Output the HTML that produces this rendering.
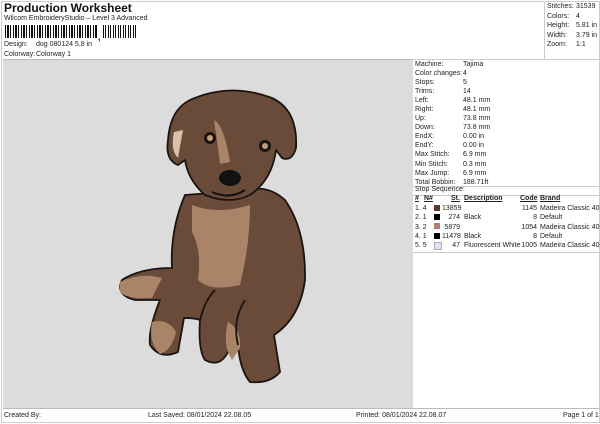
<!DOCTYPE html>
<html><head><style>
body{margin:0;width:600px;height:424px;background:#fff;font-family:"Liberation Sans",sans-serif;color:#222;position:relative;overflow:hidden}
.a{position:absolute;font-size:7px;white-space:nowrap}
.b{position:absolute}
</style></head><body>
<div class="b" style="left:1px;top:1px;width:597px;height:420px;border:1px solid #ccc"></div>
<div class="a" style="left:4px;top:1px;font-size:12px;font-weight:bold;color:#111">Production Worksheet</div>
<div class="a" style="left:4px;top:15px">Wilcom EmbroideryStudio – Level 3 Advanced</div>
<div class="b" style="left:5px;top:25px;width:93px;height:13px;background:repeating-linear-gradient(90deg,#111 0 1px,#fff 1px 2px,#111 2px 4px,#fff 4px 5px,#111 5px 6px,#fff 6px 8px)"></div>
<div class="a" style="left:98px;top:32px;font-weight:bold;font-size:9px">,</div>
<div class="b" style="left:103px;top:25px;width:33px;height:13px;background:repeating-linear-gradient(90deg,#111 0 1px,#fff 1px 2px,#111 2px 3px,#fff 3px 5px)"></div>
<div class="a" style="left:4px;top:41px">Design:</div><div class="a" style="left:36px;top:41px">dog 080124 5,8 in</div>
<div class="a" style="left:4px;top:51px">Colorway:</div><div class="a" style="left:36px;top:51px">Colorway 1</div>
<div class="b" style="left:3px;top:59px;width:410px;height:1px;background:#bbb"></div>
<div class="b" style="left:544px;top:1px;width:1px;height:58px;background:#ccc"></div>
<div class="a" style="left:547px;top:2px;line-height:9.6px">Stitches:<br>Colors:<br>Height:<br>Width:<br>Zoom:</div>
<div class="a" style="left:576px;top:2px;line-height:9.6px">31539<br>4<br>5.81 in<br>3.79 in<br>1:1</div>
<div class="b" style="left:3px;top:60px;width:410px;height:348px;background:#dcdcdc"></div>
<div class="b" style="left:413px;top:59px;width:186px;height:1px;background:#ccc"></div>
<div class="a" style="left:415px;top:60px;line-height:9.05px">Machine:<br>Color changes:<br>Stops:<br>Trims:<br>Left:<br>Right:<br>Up:<br>Down:<br>EndX:<br>EndY:<br>Max Stitch:<br>Min Stitch:<br>Max Jump:<br>Total Bobbin:</div>
<div class="a" style="left:463px;top:60px;line-height:9.05px">Tajima<br>4<br>5<br>14<br>48.1 mm<br>48.1 mm<br>73.8 mm<br>73.8 mm<br>0.00 in<br>0.00 in<br>6.9 mm<br>0.3 mm<br>6.9 mm<br>188.71ft</div>
<div class="b" style="left:413px;top:186px;width:186px;height:1px;background:#ccc"></div>
<div class="a" style="left:415px;top:186px">Stop Sequence:</div>
<div class="b" style="left:413px;top:195px;width:186px;height:1px;background:#ccc"></div>
<div class="a" style="left:415px;top:195px;font-weight:bold;text-decoration:underline">#</div>
<div class="a" style="left:424px;top:195px;font-weight:bold;text-decoration:underline">N#</div>
<div class="a" style="left:451px;top:195px;font-weight:bold;text-decoration:underline">St.</div>
<div class="a" style="left:464px;top:195px;font-weight:bold;text-decoration:underline">Description</div>
<div class="a" style="left:520px;top:195px;font-weight:bold;text-decoration:underline">Code</div>
<div class="a" style="left:540px;top:195px;font-weight:bold;text-decoration:underline">Brand</div>
<div class="a" style="left:415px;top:204px;line-height:9.3px">1. 4<br>2. 1<br>3. 2<br>4. 1<br>5. 5</div>
<div class="b" style="left:434px;top:205px;width:6px;height:6px;background:#5a3a2e"></div>
<div class="b" style="left:434px;top:214px;width:6px;height:6px;background:#000"></div>
<div class="b" style="left:434px;top:223px;width:6px;height:6px;background:#b08070"></div>
<div class="b" style="left:434px;top:233px;width:6px;height:6px;background:#000"></div>
<div class="b" style="left:434px;top:242px;width:6px;height:6px;background:#dde2f5;border:1px solid #aab"></div>
<div class="a" style="left:442px;top:204px;line-height:9.3px;text-align:right;width:18px">13859<br>274<br>5879<br>11478<br>47</div>
<div class="a" style="left:464px;top:204px;line-height:9.3px"><br>Black<br><br>Black<br>Fluorescent White</div>
<div class="a" style="left:518px;top:204px;line-height:9.3px;text-align:right;width:19px">1145<br>8<br>1054<br>8<br>1005</div>
<div class="a" style="left:540px;top:204px;line-height:9.3px">Madeira Classic 40<br>Default<br>Madeira Classic 40<br>Default<br>Madeira Classic 40</div>
<div class="b" style="left:413px;top:252px;width:186px;height:1px;background:#ccc"></div>
<div class="b" style="left:3px;top:408px;width:596px;height:1px;background:#bbb"></div>
<div class="a" style="left:4px;top:412px">Created By:</div>
<div class="a" style="left:148px;top:412px">Last Saved: 08/01/2024 22.08.05</div>
<div class="a" style="left:356px;top:412px">Printed: 08/01/2024 22.08.07</div>
<div class="a" style="left:563px;top:412px">Page 1 of 1</div>
<svg class="b" style="left:0;top:0" width="600" height="424">
<g stroke="#1a1410" stroke-width="1.8" stroke-linejoin="round">
<path fill="#6a4a38" d="M185 195 Q170 230 172 268 Q140 268 122 280 Q115 295 135 300 L160 300 Q148 330 150 345 Q160 360 178 352 L184 318 Q195 318 200 320 Q198 350 205 360 Q220 368 228 352 L238 345 Q240 370 250 382 Q270 384 280 372 L274 335 Q300 318 305 280 Q306 230 285 200 Q268 185 250 190 Z"/>
<path fill="#a98468" stroke="none" d="M192 205 Q218 215 250 205 Q250 245 240 285 Q210 292 198 280 Q202 250 192 232 Z"/>
<path fill="#a98468" stroke="none" d="M120 282 Q140 272 162 278 L152 298 Q128 300 120 292 Z"/>
<path fill="#a98468" stroke="none" d="M152 322 Q168 318 176 332 Q172 350 160 354 Q148 342 152 322 Z"/>
<path fill="#a98468" stroke="none" d="M228 322 Q242 330 240 348 L232 360 Q222 345 228 322 Z"/>
<path fill="none" d="M200 320 Q205 300 215 290 M238 345 Q232 320 245 300"/>
<path fill="#6a4a38" d="M190 100 Q230 82 272 98 Q298 110 296 148 Q292 162 282 158 L276 150 Q272 180 250 195 Q230 205 205 195 Q188 180 185 160 L178 165 Q165 160 168 140 Q170 110 190 100 Z"/>
<path fill="#d9c0a8" stroke="none" d="M174 132 Q170 150 178 158 L183 130 Z"/>
<path fill="#a98468" stroke="none" d="M214 120 Q224 125 230 162 L220 164 Q217 140 214 120 Z"/>
</g>
<circle cx="210" cy="138" r="6" fill="#1a1410"/><circle cx="210" cy="138" r="3" fill="#c0a080"/>
<circle cx="265" cy="146" r="6" fill="#1a1410"/><circle cx="265" cy="146" r="3" fill="#c0a080"/>
<ellipse cx="230" cy="178" rx="11" ry="8" fill="#111"/>
<path d="M212 192 Q230 200 245 190" stroke="#111" stroke-width="2" fill="none"/>
</svg>
</body></html>
